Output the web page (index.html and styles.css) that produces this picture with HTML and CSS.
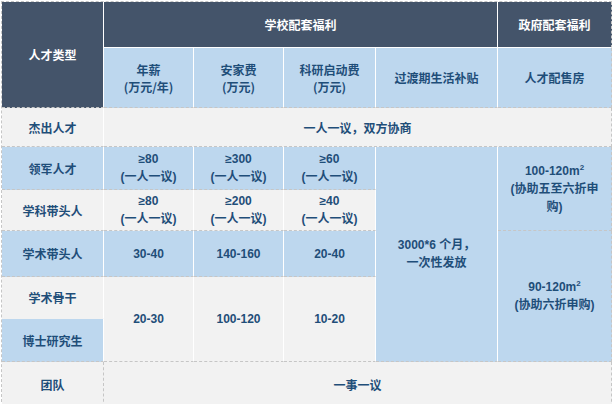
FILE: index.html
```html
<!DOCTYPE html>
<html lang="zh">
<head>
<meta charset="utf-8">
<title>人才福利</title>
<link rel="stylesheet" href="styles.css">
</head>
<body>
<div class="tbl">
  <div class="c d rs2 bot-dash"><span>人才类型</span></div>
  <div class="c d cs4 bot-white"><span>学校配套福利</span></div>
  <div class="c d bot-white last"><span>政府配套福利</span></div>

  <div class="c b"><span>年薪<br>(万元/年)</span></div>
  <div class="c b"><span>安家费<br>(万元)</span></div>
  <div class="c b"><span>科研启动费<br>(万元)</span></div>
  <div class="c b"><span>过渡期生活补贴</span></div>
  <div class="c b last"><span>人才配售房</span></div>

  <div class="c g"><span>杰出人才</span></div>
  <div class="c g cs5 last"><span>一人一议，双方协商</span></div>

  <div class="c b"><span>领军人才</span></div>
  <div class="c b num"><span>≥80<br>(一人一议)</span></div>
  <div class="c b num"><span>≥300<br>(一人一议)</span></div>
  <div class="c b num"><span>≥60<br>(一人一议)</span></div>
  <div class="c b rs5 num"><span>3000*6 个月，<br>一次性发放</span></div>
  <div class="c b rs2 last num"><span>100-120m<sup>2</sup><br>(协助五至六折申<br>购)</span></div>

  <div class="c g"><span>学科带头人</span></div>
  <div class="c g num"><span>≥80<br>(一人一议)</span></div>
  <div class="c g num"><span>≥200<br>(一人一议)</span></div>
  <div class="c g num"><span>≥40<br>(一人一议)</span></div>

  <div class="c b"><span>学术带头人</span></div>
  <div class="c b num"><span>30-40</span></div>
  <div class="c b num"><span>140-160</span></div>
  <div class="c b num"><span>20-40</span></div>
  <div class="c b rs3 last num"><span>90-120m<sup>2</sup><br>(协助六折申购)</span></div>

  <div class="c g nob"><span>学术骨干</span></div>
  <div class="c g rs2 num"><span>20-30</span></div>
  <div class="c g rs2 num"><span>100-120</span></div>
  <div class="c g rs2 num"><span>10-20</span></div>

  <div class="c b"><span>博士研究生</span></div>

  <div class="c g right-dash"><span>团队</span></div>
  <div class="c g cs5 last"><span>一事一议</span></div>
</div>
</body>
</html>
```

FILE: styles.css
```css
html, body {
  margin: 0;
  padding: 0;
  background: #ffffff;
}
body {
  padding: 1px 0 0 1px;
  overflow: hidden;
}
.tbl {
  display: grid;
  grid-template-columns: 102px 90px 90px 92px 122px 114px;
  grid-template-rows: 46px 60px 39px 43px 41px 46px 42px 43px 45px;
  width: 611px;
  box-sizing: border-box;
  border-top: 1px dashed #c6c6c6;
  border-left: 1px dashed #c6c6c6;
  font-family: "Noto Sans CJK SC", "Liberation Sans", sans-serif;
  font-weight: bold;
  font-size: 12px;
  color: #1f4e79;
}
.c {
  box-sizing: border-box;
  display: flex;
  align-items: center;
  justify-content: center;
  text-align: center;
  line-height: 17px;
  border-right: 1px solid #ffffff;
  border-bottom: 1px dashed #c6c6c6;
  padding: 0 2px;
}
.num {
  font-family: "Liberation Sans", "Noto Sans CJK SC", sans-serif;
  line-height: 18px;
}
.d {
  background: #44546a;
  color: #ffffff;
}
.b { background: #bdd7ee; }
.g { background: #f2f2f2; }
.rs2 { grid-row: span 2; }
.rs3 { grid-row: span 3; }
.rs5 { grid-row: span 5; }
.cs4 { grid-column: span 4; }
.cs5 { grid-column: span 5; }
.bot-white { border-bottom: 1px solid #ffffff; }
.bot-dash { border-bottom: 1px dashed #c6c6c6; }
.last { border-right: 1px dashed #c6c6c6; }
.right-dash { border-right: 1px dashed #c6c6c6; }
.nob { border-bottom-color: transparent; }
sup {
  font-size: 8px;
  line-height: 0;
  vertical-align: 5px;
}
```
